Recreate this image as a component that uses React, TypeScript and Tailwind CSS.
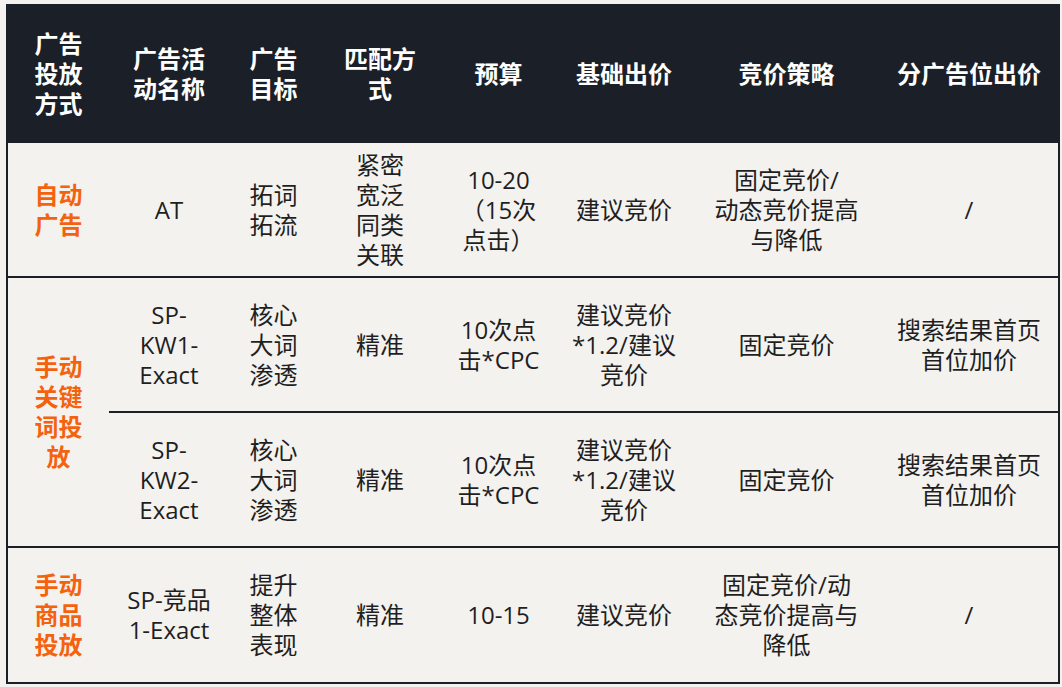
import React from "react";

const FONT = "font-['Open_Sans','Noto_Sans_CJK_SC',sans-serif]";

type Cell = { lines: string[]; orange?: boolean };

const headers: string[][] = [
  ["广告", "投放", "方式"],
  ["广告活", "动名称"],
  ["广告", "目标"],
  ["匹配方", "式"],
  ["预算"],
  ["基础出价"],
  ["竞价策略"],
  ["分广告位出价"],
];

const Lines: React.FC<{ lines: string[] }> = ({ lines }) => (
  <div className="flex flex-col items-center">
    {lines.map((l, i) => (
      <span key={i} className="whitespace-nowrap">
        {l}
      </span>
    ))}
  </div>
);

const Td: React.FC<{ cell: Cell; className?: string }> = ({ cell, className = "" }) => (
  <div
    className={`flex items-center justify-center text-center ${
      cell.orange ? "text-[#f4620e] font-bold" : "text-[#1f1f1f]"
    } ${className}`}
  >
    <Lines lines={cell.lines} />
  </div>
);

const kwRow = (n: number): Cell[] => [
  { lines: ["SP-", `KW${n}-`, "Exact"] },
  { lines: ["核心", "大词", "渗透"] },
  { lines: ["精准"] },
  { lines: ["10次点", "击*CPC"] },
  { lines: ["建议竞价", "*1.2/建议", "竞价"] },
  { lines: ["固定竞价"] },
  { lines: ["搜索结果首页", "首位加价"] },
];

const App: React.FC = () => {
  const row1: Cell[] = [
    { lines: ["自动", "广告"], orange: true },
    { lines: ["AT"] },
    { lines: ["拓词", "拓流"] },
    { lines: ["紧密", "宽泛", "同类", "关联"] },
    { lines: ["10-20", "（15次", "点击）"] },
    { lines: ["建议竞价"] },
    { lines: ["固定竞价/", "动态竞价提高", "与降低"] },
    { lines: ["/"] },
  ];
  const row4: Cell[] = [
    { lines: ["手动", "商品", "投放"], orange: true },
    { lines: ["SP-竞品", "1-Exact"] },
    { lines: ["提升", "整体", "表现"] },
    { lines: ["精准"] },
    { lines: ["10-15"] },
    { lines: ["建议竞价"] },
    { lines: ["固定竞价/动", "态竞价提高与", "降低"] },
    { lines: ["/"] },
  ];

  return (
    <div className={`min-h-[687px] w-[1062px] bg-[#f4f2ee] pl-[6px] pt-[4px] ${FONT} text-[24px] leading-[30px]`}>
      <div className="w-[1054px] border-x-2 border-b-2 border-[#1b1f27] bg-[#f4f2ef]">
        <div className="grid grid-cols-[101px_120px_89px_124px_113px_138px_187px_178px] grid-rows-[139px_135px_135px_135px_134px]">
          {headers.map((h, i) => (
            <div
              key={i}
              className="flex items-center justify-center bg-[#1b1f27] text-center font-bold text-white"
            >
              <Lines lines={h} />
            </div>
          ))}

          {row1.map((c, i) => (
            <Td key={`r1-${i}`} cell={c} className="border-b-2 border-[#1b1f27]" />
          ))}

          <Td
            cell={{ lines: ["手动", "关键", "词投", "放"], orange: true }}
            className="row-span-2 border-b-2 border-[#1b1f27]"
          />
          {kwRow(1).map((c, i) => (
            <Td key={`r2-${i}`} cell={c} className="border-b-2 border-[#1b1f27]" />
          ))}
          {kwRow(2).map((c, i) => (
            <Td key={`r3-${i}`} cell={c} className="border-b-2 border-[#1b1f27]" />
          ))}

          {row4.map((c, i) => (
            <Td key={`r4-${i}`} cell={c} />
          ))}
        </div>
      </div>
    </div>
  );
};

export default App;
